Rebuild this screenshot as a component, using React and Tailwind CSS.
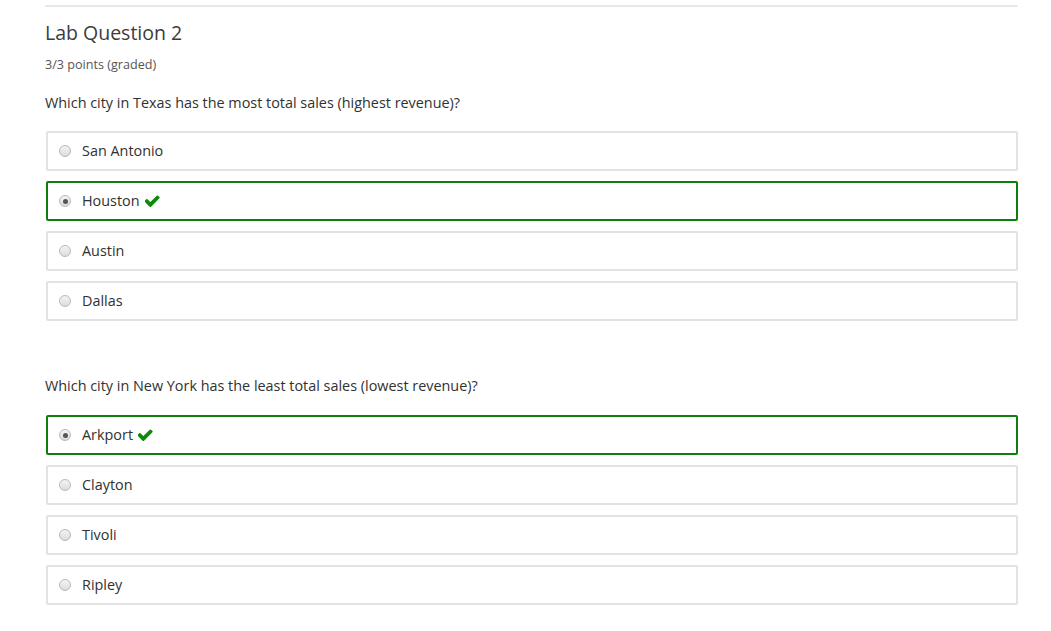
import React from 'react'

function Radio({ checked }) {
  return (
    <span className="flex h-[12px] w-[12px] shrink-0 items-center justify-center rounded-full border border-[#b9b9b9] bg-gradient-to-b from-[#f4f4f4] to-[#dcdcdc]">
      {checked && <span className="h-[5px] w-[5px] rounded-full bg-[#555]" />}
    </span>
  )
}

function Check() {
  return (
    <svg width="15" height="12" viewBox="0 0 1536 1200" className="ml-[5px]">
      <path
        fill="#0b8a0b"
        d="M1504 262q0 40-28 68l-724 724-136 136q-28 28-68 28t-68-28l-136-136-362-362q-28-28-28-68t28-68l136-136q28-28 68-28t68 28l294 295 656-657q28-28 68-28t68 28l136 136q28 28 28 68z"
      />
    </svg>
  )
}

function Option({ label, correct }) {
  return (
    <div
      className={
        correct
          ? 'flex h-[40px] items-center rounded-[2px] border-2 border-[#0d7f0d] pl-[11px]'
          : 'flex h-[40px] items-center rounded-[2px] border-2 border-[#e2e2e2] pl-[11px]'
      }
    >
      <Radio checked={correct} />
      <span className="ml-[11px] text-[14.4px] text-[#313131]">{label}</span>
      {correct && <Check />}
    </div>
  )
}

const q1 = ['San Antonio', 'Houston', 'Austin', 'Dallas']
const q2 = ['Arkport', 'Clayton', 'Tivoli', 'Ripley']

export default function App() {
  return (
    <div className="min-h-[631px] bg-white" style={{ fontFamily: '"Open Sans", sans-serif' }}>
      <div className="ml-[45px] w-[973px] pt-[5px]">
        <div className="h-[2px] bg-[#e8e8e8]" />
        <h2 className="mt-[12px] text-[19.5px] leading-[28px] text-[#3c3c3c]">Lab Question 2</h2>
        <p className="mt-[9px] text-[12.6px] leading-[18px] text-[#555]">3/3 points (graded)</p>
        <p className="mt-[19px] text-[14.4px] leading-[20px] text-[#313131]">
          Which city in Texas has the most total sales (highest revenue)?
        </p>
        <div className="ml-px mt-[18px] flex flex-col gap-[10px]">
          {q1.map((c) => (
            <Option key={c} label={c} correct={c === 'Houston'} />
          ))}
        </div>
        <p className="mt-[55px] text-[14.4px] leading-[20px] text-[#313131]">
          Which city in New York has the least total sales (lowest revenue)?
        </p>
        <div className="ml-px mt-[19px] flex flex-col gap-[10px]">
          {q2.map((c) => (
            <Option key={c} label={c} correct={c === 'Arkport'} />
          ))}
        </div>
      </div>
    </div>
  )
}
